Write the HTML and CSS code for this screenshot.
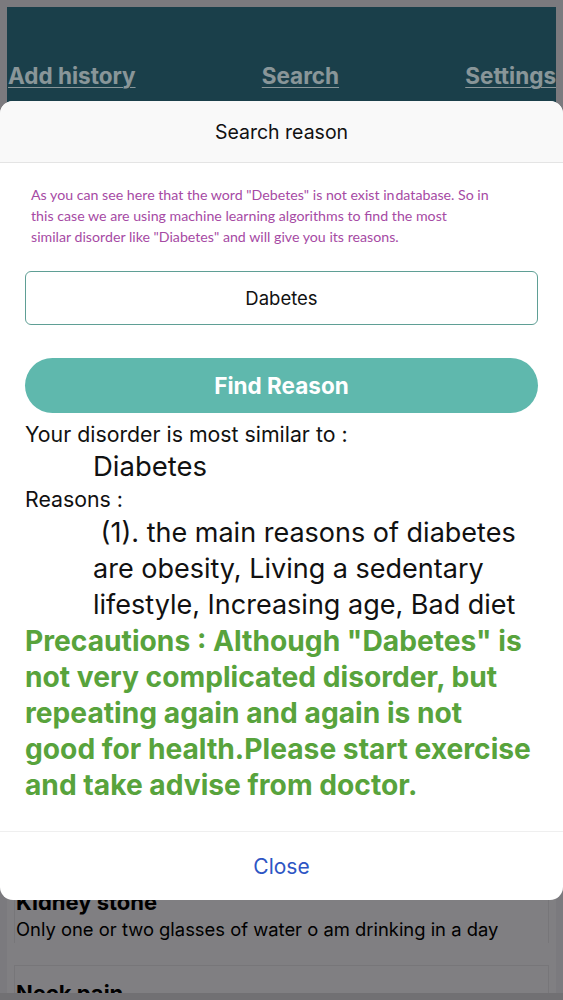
FILE: index.html
```html
<!DOCTYPE html>
<html>
<head>
<meta charset="utf-8">
<link rel="stylesheet" href="styles.css">
</head>
<body>
<div class="page">
  <header class="topbar">
    <nav class="nav">
      <a class="nav-link">Add history</a>
      <a class="nav-link">Search</a>
      <a class="nav-link">Settings</a>
    </nav>
  </header>
  <main class="list">
    <section class="card">
      <h3 class="card-title">Diabetes</h3>
      <p class="card-text">Sugar level is high</p>
    </section>
    <section class="card">
      <h3 class="card-title">Headache</h3>
      <p class="card-text">Sleeping less than six hours</p>
    </section>
    <section class="card">
      <h3 class="card-title">Fever</h3>
      <p class="card-text">Weather change</p>
    </section>
    <section class="card">
      <h3 class="card-title">Back pain</h3>
      <p class="card-text">Sitting for long hours</p>
    </section>
    <section class="card">
      <h3 class="card-title">Cough</h3>
      <p class="card-text">Cold drinks</p>
    </section>
    <section class="card">
      <h3 class="card-title">Allergy</h3>
      <p class="card-text">Dust</p>
    </section>
    <section class="card">
      <h3 class="card-title">Stomach ache</h3>
      <p class="card-text">Spicy food</p>
    </section>
    <section class="card">
      <h3 class="card-title">Migraine</h3>
      <p class="card-text">Stress</p>
    </section>
    <section class="card">
      <h3 class="card-title">Kidney stone</h3>
      <p class="card-text">Only one or two glasses of water o am drinking in a day</p>
    </section>
    <section class="card">
      <h3 class="card-title">Neck pain</h3>
      <p class="card-text">Using phone</p>
    </section>
  </main>
</div>
<div class="bottom-bar"></div>
<div class="overlay"></div>
<div class="modal">
  <div class="modal-head">Search reason</div>
  <div class="modal-body">
    <p class="note">As you can see here that the word "Debetes" is not exist in&#8202;database. So in<br>this case we are using machine learning algorithms to find the most<br>similar disorder like "Diabetes" and will give you its reasons.</p>
    <div class="field">Dabetes</div>
    <button class="find-btn">Find Reason</button>
    <p class="label">Your disorder is most similar to :</p>
    <p class="result">Diabetes</p>
    <p class="label">Reasons :</p>
    <p class="reasons">&nbsp;(1). the main reasons of diabetes are obesity, Living a sedentary lifestyle, Increasing age, Bad diet</p>
    <p class="precautions">Precautions : Although "Dabetes" is not very complicated disorder, but repeating again and again is not<br>good for health.Please start exercise and take advise from doctor.</p>
  </div>
  <div class="modal-foot">Close</div>
</div>
</body>
</html>
```

FILE: styles.css
```css
* { box-sizing: border-box; }
html, body { margin: 0; padding: 0; }
body {
  width: 563px;
  height: 1000px;
  overflow: hidden;
  background: #cdcbd2;
  font-family: Inter, Roboto, "Liberation Sans", sans-serif;
  position: relative;
}
.page {
  margin: 7px 7px 0;
  height: 986px;
  background: #d6d4d9;
  overflow: hidden;
}
.bottom-bar {
  height: 7px;
  background: #bcbbc0;
}
.topbar {
  height: 96px;
  background: #2c697c;
  display: flex;
  align-items: flex-end;
}
.nav {
  width: 100%;
  display: flex;
  justify-content: space-between;
  padding: 0 0 14px 1px;
}
.nav-link {
  font-size: 22.5px;
  font-weight: 700;
  color: #e5fbff;
  text-decoration: underline;
  text-underline-offset: 3px;
  text-decoration-thickness: 1px;
}
.list {
  padding: 43px 7px 0;
  display: flex;
  flex-direction: column;
  gap: 22px;
}
.card {
  height: 69px;
  flex: none;
  border: 1px solid #c6c5ca;
  border-bottom: none;
  padding: 15px 2px 0 1px;
  margin: 0;
}
.card-title {
  margin: 0;
  font-size: 22px;
  line-height: 24px;
  font-weight: 700;
  color: #000;
}
.card-text {
  margin: 3px 0 0;
  font-size: 18.4px;
  line-height: 24px;
  color: #000;
}
.overlay {
  position: absolute;
  inset: 0;
  background: rgba(0, 0, 0, 0.4);
}
.modal {
  position: absolute;
  top: 101px;
  left: 0;
  width: 563px;
  height: 799px;
  background: #ffffff;
  border-radius: 13px;
  overflow: hidden;
  display: flex;
  flex-direction: column;
}
.modal-head {
  height: 62px;
  flex: none;
  background: #f9f9f9;
  border-bottom: 1px solid #e4e4e4;
  display: flex;
  align-items: center;
  justify-content: center;
  font-size: 19.5px;
  color: #111;
}
.modal-body {
  flex: 1;
  padding: 21px 25px 0;
}
.note {
  margin: 0 0 0 6px;
  font-family: Lato, "Open Sans", sans-serif;
  font-size: 14.2px;
  line-height: 21px;
  color: #a64aa4;
  white-space: nowrap;
}
.field {
  margin-top: 24px;
  height: 54px;
  border: 1px solid #5f9f95;
  border-radius: 6px;
  display: flex;
  align-items: center;
  justify-content: center;
  font-size: 18.5px;
  color: #111;
}
.find-btn {
  margin-top: 33px;
  width: 100%;
  height: 55px;
  border: none;
  border-radius: 28px;
  background: #5fb8ad;
  color: #fff;
  font-family: inherit;
  font-size: 22.5px;
  font-weight: 700;
  display: block;
}
.label {
  margin: 0;
  font-size: 21.3px;
  line-height: 31px;
  color: #111;
}
.find-btn + .label { margin-top: 6px; }
.result {
  margin: 0;
  padding-left: 68px;
  font-size: 27.5px;
  line-height: 33px;
  color: #111;
}
.result + .label { line-height: 32px; }
.reasons {
  margin: 0;
  padding-left: 68px;
  padding-right: 10px;
  font-size: 27px;
  line-height: 36px;
  color: #111;
}
.precautions {
  margin: 0;
  font-size: 28.2px;
  font-weight: 700;
  line-height: 36px;
  color: #58a33c;
}
.modal-foot {
  height: 69px;
  flex: none;
  border-top: 1px solid #efefef;
  display: flex;
  align-items: center;
  justify-content: center;
  font-size: 21px;
  color: #2d55c4;
}
```
